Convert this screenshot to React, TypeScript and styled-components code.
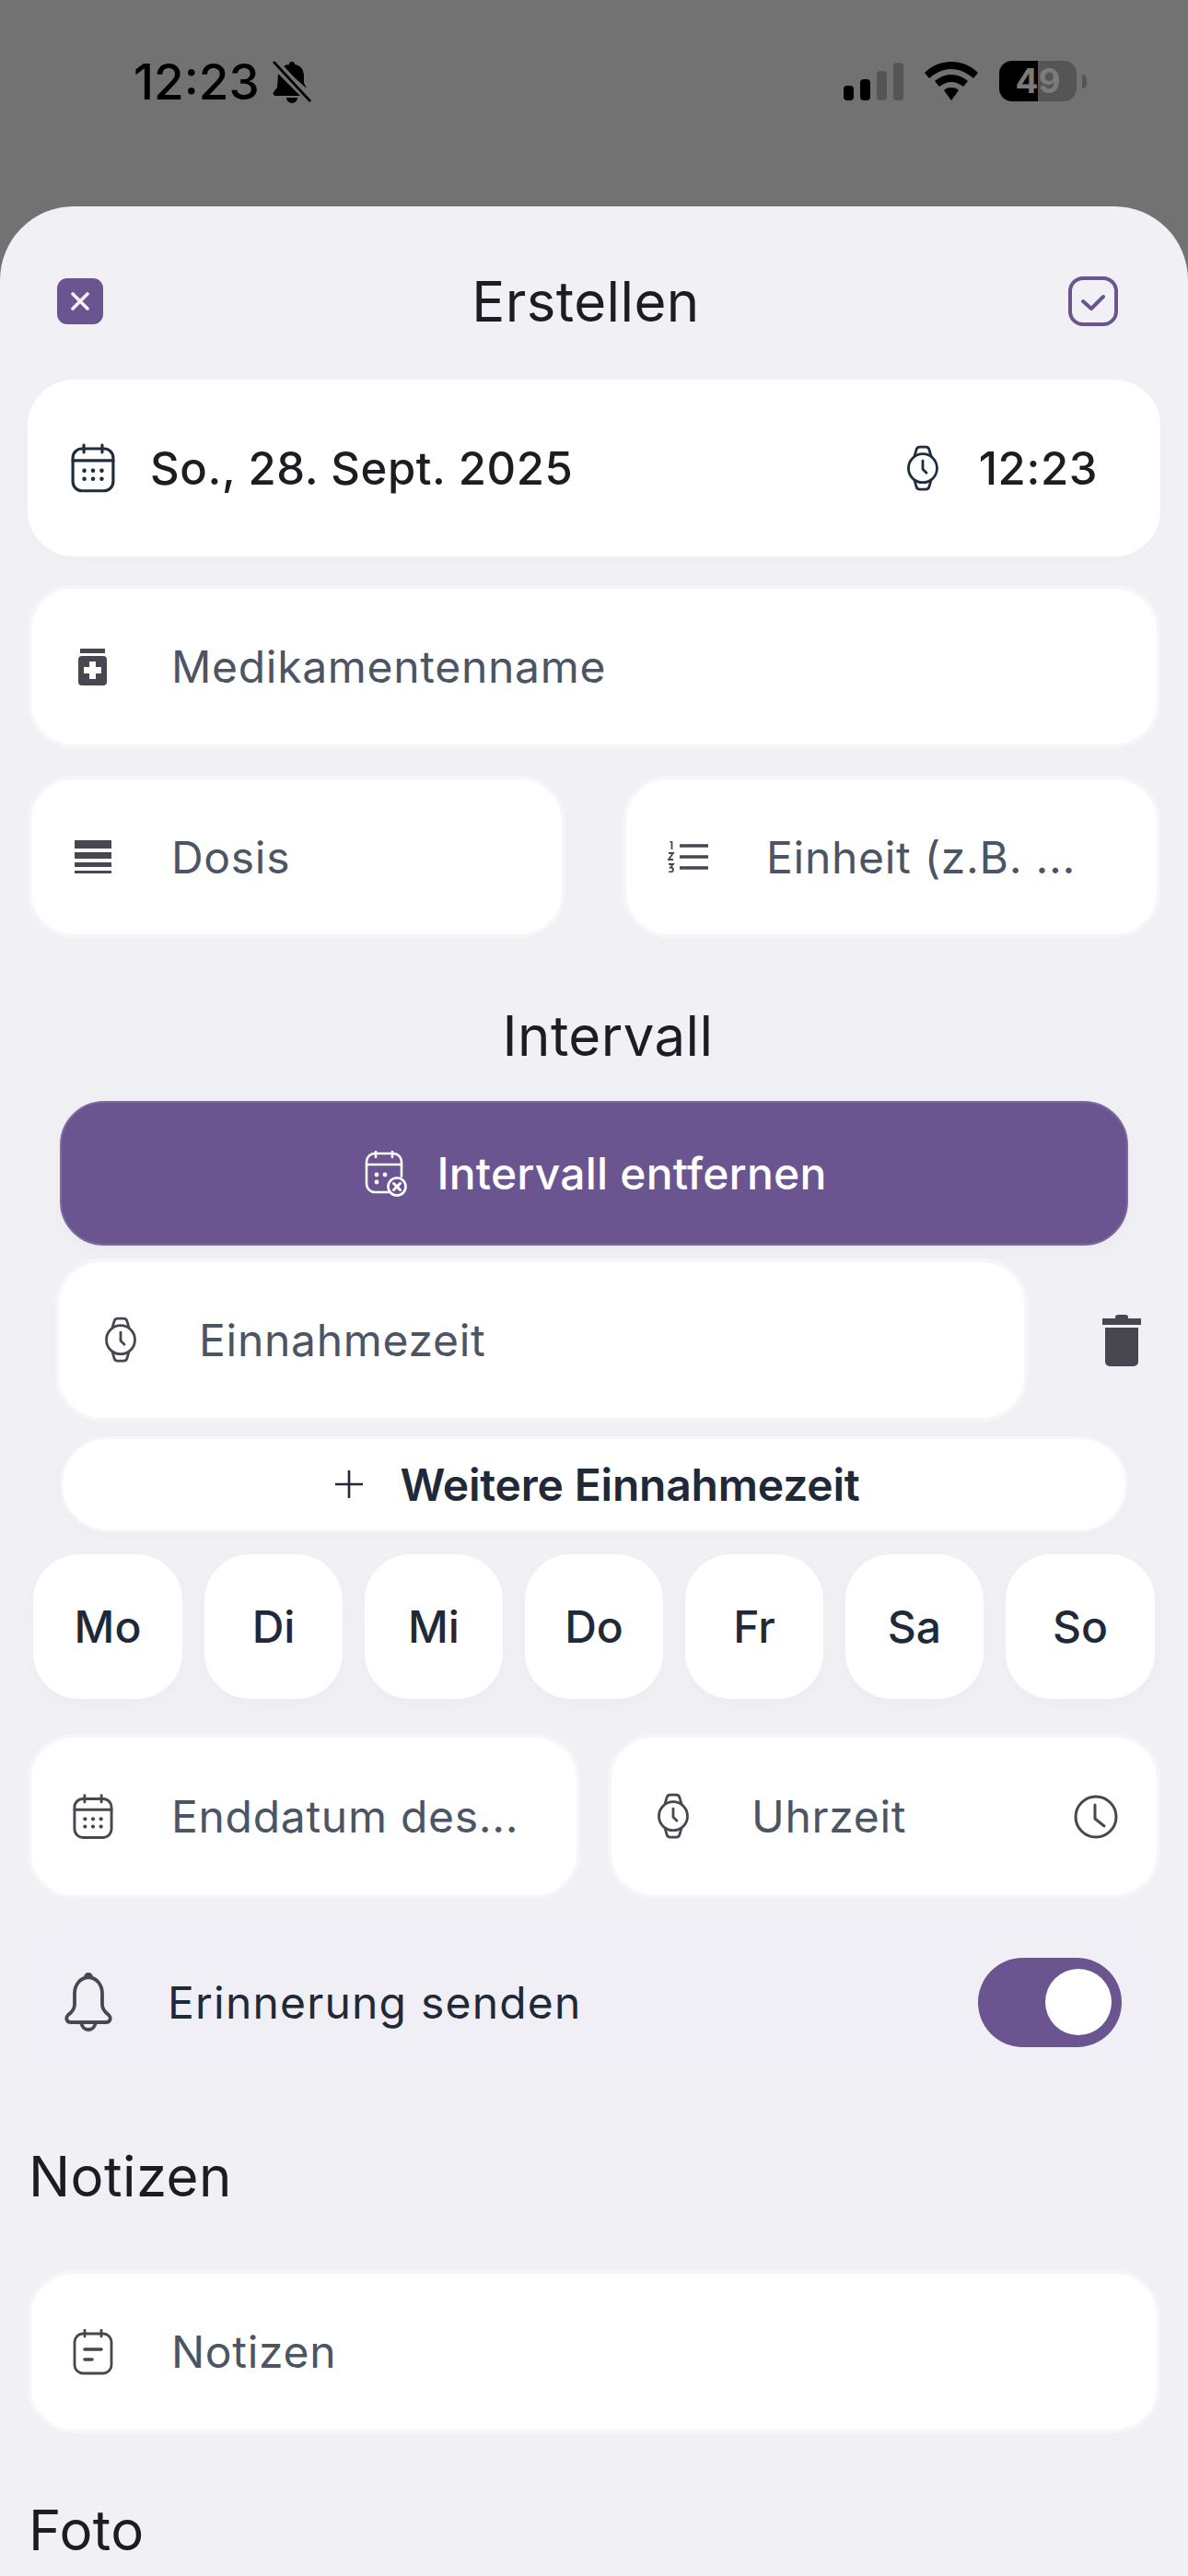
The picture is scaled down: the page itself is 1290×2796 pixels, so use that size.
import React from 'react'
import styled, { createGlobalStyle } from 'styled-components'

const PURPLE = '#6a5590'
const INK = '#1f2937'
const ICON = '#4a4651'

const GlobalStyle = createGlobalStyle`
  html, body {
    margin: 0;
    padding: 0;
    background: #727272;
  }
  * {
    box-sizing: border-box;
  }
`

const Screen = styled.div`
  width: 1290px;
  height: 2796px;
  overflow: hidden;
  background: #727272;
  font-family: Inter, 'Noto Sans', sans-serif;
`

const StatusBar = styled.div`
  height: 224px;
  display: flex;
  justify-content: space-between;
  align-items: flex-start;
  padding: 66px 110px 0 145px;
  color: #000;
`

const StatusGroup = styled.div<{ $gap: number }>`
  display: flex;
  align-items: center;
  gap: ${(p) => p.$gap}px;
`

const Time = styled.span`
  font-size: 53px;
  font-weight: 500;
  line-height: 44px;
`

const Battery = styled.span`
  width: 84px;
  height: 44px;
  border-radius: 14px;
  background: linear-gradient(90deg, #000 50%, #555 50%);
  color: #7b7b7b;
  font-size: 37px;
  font-weight: 700;
  line-height: 44px;
  text-align: center;
`

const BatteryNub = styled.span`
  width: 5px;
  height: 15px;
  margin-left: -17px;
  border-radius: 0 5px 5px 0;
  background: #555;
`

const Sheet = styled.div`
  height: 2572px;
  background: #f0f0f5;
  border-radius: 80px 80px 0 0;
  overflow: hidden;
  padding-top: 76px;
`

const Header = styled.div`
  display: flex;
  justify-content: space-between;
  align-items: center;
  height: 54px;
  padding: 0 76px 0 62px;
`

const Title = styled.div`
  font-size: 60px;
  line-height: 70px;
  color: #1c1c22;
  letter-spacing: 0.4px;
`

const CloseButton = styled.div`
  width: 50px;
  height: 50px;
  border-radius: 11px;
  background: ${PURPLE};
  display: flex;
  align-items: center;
  justify-content: center;
`

const DateCard = styled.div`
  margin: 58px 30px 0;
  height: 192px;
  border-radius: 50px;
  background: #fff;
  box-shadow: 0 6px 24px rgba(0, 0, 0, 0.015);
  display: flex;
  align-items: center;
  padding: 0 68px 0 47px;
`

const DateText = styled.span<{ $ml: number }>`
  margin-left: ${(p) => p.$ml}px;
  font-size: 49px;
  font-weight: 500;
  letter-spacing: 0.6px;
  color: #1c1c22;
`

const Spacer = styled.div`
  flex: 1;
`

const FieldRow = styled.div<{ $mt: number; $gap?: number; $mx?: string }>`
  display: flex;
  margin: ${(p) => p.$mt}px ${(p) => p.$mx ?? '30px 0'};
  gap: ${(p) => p.$gap ?? 0}px;
`

const Field = styled.div<{ $w?: number; $h?: number }>`
  flex: ${(p) => (p.$w ? `0 0 ${p.$w}px` : '1')};
  height: ${(p) => p.$h ?? 177}px;
  border-radius: 50px;
  background: #fff;
  border: 4px solid #f6f6f9;
  display: flex;
  align-items: center;
  padding: 0 42px 0 39px;
`

const IconSlot = styled.span`
  flex: 0 0 56px;
  display: flex;
  justify-content: center;
  align-items: center;
`

const Placeholder = styled.span`
  margin-left: 57px;
  flex: 1;
  font-size: 48px;
  letter-spacing: 0.7px;
  color: #4b5563;
  white-space: nowrap;
`

const SectionTitle = styled(Title)<{ $mt: number }>`
  margin-top: ${(p) => p.$mt}px;
  padding-left: 30px;
  text-align: center;
`

const SideTitle = styled(Title)<{ $mt: number }>`
  margin-top: ${(p) => p.$mt}px;
  padding-left: 31px;
`

const PrimaryButton = styled.div`
  margin: 36px 65px 0;
  height: 157px;
  border-radius: 48px;
  background: ${PURPLE};
  border: 2px solid #7b6a9e;
  box-shadow: 0 6px 24px rgba(0, 0, 0, 0.03);
  display: flex;
  align-items: center;
  justify-content: center;
  gap: 32px;
  padding-left: 4px;
  color: #fff;
  font-size: 48px;
  font-weight: 500;
  letter-spacing: 0.2px;
`

const TrashSlot = styled.div`
  flex: 1;
  display: flex;
  align-items: center;
  justify-content: center;
  padding-left: 60px;
`

const AddButton = styled.div`
  margin: 16px 65px 0;
  height: 104px;
  border-radius: 52px;
  background: #fff;
  border: 3px solid #f6f6f9;
  box-shadow: 0 6px 24px rgba(0, 0, 0, 0.02);
  display: flex;
  align-items: center;
  justify-content: center;
  gap: 40px;
  padding-left: 8px;
  font-size: 48px;
  font-weight: 600;
  letter-spacing: -0.2px;
  color: ${INK};
`

const DayRow = styled.div`
  display: flex;
  gap: 24px;
  margin: 24px 36px 0;
`

const DayChip = styled.div<{ $wide?: boolean }>`
  flex: 0 0 ${(p) => (p.$wide ? 162 : 150)}px;
  height: 157px;
  border-radius: 50px;
  background: #fff;
  box-shadow: 0 8px 24px rgba(0, 0, 0, 0.025);
  display: flex;
  align-items: center;
  justify-content: center;
  font-size: 48px;
  font-weight: 500;
  color: ${INK};
`

const NotifyRow = styled.div`
  margin: 31px 30px 0;
  height: 162px;
  border-radius: 40px;
  background: #f0eff5;
  display: flex;
  align-items: center;
  padding: 0 42px 0 40px;
`

const NotifyLabel = styled.span`
  margin-left: 60px;
  flex: 1;
  font-size: 48px;
  letter-spacing: 1.2px;
  color: ${INK};
`

const Toggle = styled.div`
  width: 156px;
  height: 97px;
  border-radius: 49px;
  background: ${PURPLE};
  display: flex;
  align-items: center;
  justify-content: flex-end;
  padding-right: 11px;
`

const Knob = styled.span`
  width: 72px;
  height: 72px;
  border-radius: 50%;
  background: #fff;
`

function CalendarIcon({ color = ICON, size = 48 }: { color?: string; size?: number }) {
  return (
    <svg width={size} height={size * 1.12} viewBox="0 0 48 54" fill="none" stroke={color} strokeWidth="3.2" strokeLinecap="round">
      <rect x="2" y="6" width="44" height="46" rx="10" />
      <path d="M14 2v8M34 2v8M2 19h44" />
      <g fill={color} stroke="none">
        <circle cx="14.5" cy="30" r="2.3" />
        <circle cx="24" cy="30" r="2.3" />
        <circle cx="33.5" cy="30" r="2.3" />
        <circle cx="14.5" cy="39" r="2.3" />
        <circle cx="24" cy="39" r="2.3" />
        <circle cx="33.5" cy="39" r="2.3" />
      </g>
    </svg>
  )
}

function CalendarRemoveIcon() {
  return (
    <svg width="46" height="50" viewBox="0 0 46 50" fill="none" stroke="#fff" strokeWidth="2.6" strokeLinecap="round">
      <path d="M26 45H11a9 9 0 0 1-9-9V12a9 9 0 0 1 9-9h20a9 9 0 0 1 9 9v16" />
      <path d="M12 1v6M30 1v6M2 15h38" />
      <g fill="#fff" stroke="none">
        <circle cx="13" cy="26" r="2.4" />
        <circle cx="22" cy="26" r="2.4" />
        <circle cx="13" cy="34" r="2.4" />
      </g>
      <circle cx="35" cy="39" r="9.5" />
      <path d="M31.5 35.5l7 7M38.5 35.5l-7 7" strokeWidth="3" />
    </svg>
  )
}

function WatchIcon({ color = ICON, size = 36 }: { color?: string; size?: number }) {
  return (
    <svg width={size} height={size * 1.4} viewBox="0 0 36 50" fill="none" stroke={color} strokeWidth="2.8" strokeLinecap="round" strokeLinejoin="round">
      <circle cx="18" cy="25" r="15.5" />
      <path d="M9 12l2-7a4 4 0 0 1 4-3h6a4 4 0 0 1 4 3l2 7" />
      <path d="M9 38l2 7a4 4 0 0 0 4 3h6a4 4 0 0 0 4-3l2-7" />
      <path d="M18 17v9l4 4" />
    </svg>
  )
}

function BottleIcon() {
  return (
    <svg width="32" height="40" viewBox="0 0 32 40">
      <rect x="2" y="0" width="27" height="5" fill={ICON} />
      <rect x="0" y="8" width="31" height="32" rx="4" fill={ICON} />
      <path d="M12 14h7v6h6v7h-6v6h-7v-6H6v-7h6z" fill="#fff" />
    </svg>
  )
}

function StackIcon() {
  return (
    <svg width="40" height="36" viewBox="0 0 40 36" fill={ICON}>
      <rect x="0" y="0" width="40" height="9" />
      <rect x="0" y="13" width="40" height="7" />
      <rect x="0" y="24" width="40" height="5" />
      <rect x="0" y="33" width="40" height="3" />
    </svg>
  )
}

function NumberedListIcon() {
  return (
    <svg width="44" height="34" viewBox="0 0 44 34" fill="none" stroke={ICON}>
      <path d="M13 5h31M13 17h31M13 29h31" strokeWidth="3.6" />
      <path d="M2.500 1L4.500 0v9" strokeWidth="1.8" />
      <path d="M1 13h5l-5 7h5" strokeWidth="1.8" />
      <path d="M1 25h5l-3 3.500c2 0 3 1 3 2.500s-1 2.500-3 2.500H1" strokeWidth="1.8" />
    </svg>
  )
}

function TrashIcon() {
  return (
    <svg width="42" height="56" viewBox="0 0 42 56" fill={ICON}>
      <path d="M14 3a3 3 0 0 1 3-3h8a3 3 0 0 1 3 3v1h14v7H0V4h14z" />
      <path d="M3 14h36v37a5 5 0 0 1-5 5H8a5 5 0 0 1-5-5z" />
    </svg>
  )
}

function ClockIcon() {
  return (
    <svg width="48" height="50" viewBox="0 0 48 50" fill="none" stroke={ICON} strokeWidth="3" strokeLinecap="round" strokeLinejoin="round">
      <circle cx="24" cy="25" r="22" />
      <path d="M23 12v15l10 8" />
    </svg>
  )
}

function NoteIcon() {
  return (
    <svg width="44" height="50" viewBox="0 0 44 50" fill="none" stroke={ICON} strokeWidth="2.8" strokeLinecap="round">
      <rect x="2" y="5" width="40" height="43" rx="9" />
      <path d="M13 1v7M31 1v7" />
      <path d="M13 22h18M13 33h8" strokeWidth="3.6" />
    </svg>
  )
}

function BellIcon() {
  return (
    <svg width="52" height="64" viewBox="0 0 52 64" fill="none" stroke={ICON} strokeWidth="3.8" strokeLinejoin="round" strokeLinecap="round">
      <path d="M26 5c-9 1-15 8-15 18v12c0 5-3 8-7 11-3 3-2 8 3 8h38c5 0 6-5 3-8-4-3-7-6-7-11V23c0-10-6-17-15-18z" />
      <path d="M23 5c0-4 6-4 6 0" />
      <path d="M18 54c1 5 4 8 8 8s7-3 8-8" />
    </svg>
  )
}

function BellOffIcon() {
  return (
    <svg width="42" height="46" viewBox="0 0 42 46" fill="#000">
      <path d="M21 1c2 0 3 1 3 3 7 1 10 6 10 13v7l3 6L11 7c2-2 4-3 7-3 0-2 1-3 3-3z" />
      <path d="M6 14l24 24H4c-3 0-4-2-3-4l4-5z" />
      <path d="M15 40h12c0 3-3 6-6 6s-6-3-6-6z" />
      <path d="M1 1l40 43" stroke="#000" strokeWidth="2.6" />
      <path d="M5 0l37 40" stroke="#727272" strokeWidth="2.6" />
    </svg>
  )
}

function SignalIcon() {
  return (
    <svg width="65" height="41" viewBox="0 0 65 41">
      <rect x="0" y="25" width="11" height="16" rx="4" fill="#000" />
      <rect x="18" y="18" width="11" height="23" rx="4" fill="#000" />
      <rect x="36" y="9" width="11" height="32" rx="4" fill="#555" />
      <rect x="54" y="0" width="11" height="41" rx="4" fill="#555" />
    </svg>
  )
}

function WifiIcon() {
  return (
    <svg width="58" height="42" viewBox="0 0 58 42" fill="#000">
      <path d="M29 0c11 0 21 4 29 12l-5 6C46 12 38 8 29 8S12 12 5 18l-5-6C8 4 18 0 29 0z" />
      <path d="M29 14c7 0 13 3 18 7l-5 6c-4-3-8-5-13-5s-9 2-13 5l-5-6c5-4 11-7 18-7z" />
      <path d="M29 28c4 0 6 1 8 3l-8 11-8-11c2-2 4-3 8-3z" />
    </svg>
  )
}

const DAYS = ['Mo', 'Di', 'Mi', 'Do', 'Fr', 'Sa', 'So']

export default function App() {
  return (
    <Screen>
      <GlobalStyle />
      <StatusBar>
        <StatusGroup $gap={14}>
          <Time>12:23</Time>
          <BellOffIcon />
        </StatusGroup>
        <StatusGroup $gap={23}>
          <SignalIcon />
          <WifiIcon />
          <Battery>49</Battery>
          <BatteryNub />
        </StatusGroup>
      </StatusBar>
      <Sheet>
        <Header>
          <CloseButton>
            <svg width="20" height="20" viewBox="0 0 20 20" stroke="#f4f2f8" strokeWidth="3.6" strokeLinecap="round">
              <path d="M2 2l16 16M18 2L2 18" />
            </svg>
          </CloseButton>
          <Title>Erstellen</Title>
          <svg width="54" height="54" viewBox="0 0 54 54" fill="none" stroke={PURPLE} strokeWidth="4" strokeLinecap="round" strokeLinejoin="round">
            <rect x="2" y="2" width="50" height="50" rx="14" />
            <path d="M16 27l9 8 13-13" />
          </svg>
        </Header>

        <DateCard>
          <CalendarIcon color="#1f2d3d" />
          <DateText $ml={38}>So., 28. Sept. 2025</DateText>
          <Spacer />
          <WatchIcon color="#1f2d3d" />
          <DateText $ml={43}>12:23</DateText>
        </DateCard>

        <FieldRow $mt={31}>
          <Field>
            <IconSlot>
              <BottleIcon />
            </IconSlot>
            <Placeholder>Medikamentenname</Placeholder>
          </Field>
        </FieldRow>

        <FieldRow $mt={30} $gap={62}>
          <Field $w={584} $h={176}>
            <IconSlot>
              <StackIcon />
            </IconSlot>
            <Placeholder>Dosis</Placeholder>
          </Field>
          <Field $h={176}>
            <IconSlot>
              <NumberedListIcon />
            </IconSlot>
            <Placeholder>Einheit (z.B. ...</Placeholder>
          </Field>
        </FieldRow>

        <SectionTitle $mt={71}>Intervall</SectionTitle>

        <PrimaryButton>
          <CalendarRemoveIcon />
          <span>Intervall entfernen</span>
        </PrimaryButton>

        <FieldRow $mt={14} $mx="30px 0 60px">
          <Field $w={1056}>
            <IconSlot>
              <WatchIcon />
            </IconSlot>
            <Placeholder>Einnahmezeit</Placeholder>
          </Field>
          <TrashSlot>
            <TrashIcon />
          </TrashSlot>
        </FieldRow>

        <AddButton>
          <svg width="30" height="30" viewBox="0 0 30 30" stroke={INK} strokeWidth="2.6">
            <path d="M15 0v30M0 15h30" />
          </svg>
          <span>Weitere Einnahmezeit</span>
        </AddButton>

        <DayRow>
          {DAYS.map((day, i) => (
            <DayChip key={day} $wide={i === 0 || i === DAYS.length - 1}>
              {day}
            </DayChip>
          ))}
        </DayRow>

        <FieldRow $mt={38} $gap={30}>
          <Field $w={600} $h={179}>
            <IconSlot>
              <CalendarIcon size={44} />
            </IconSlot>
            <Placeholder>Enddatum des...</Placeholder>
          </Field>
          <Field $h={179}>
            <IconSlot>
              <WatchIcon />
            </IconSlot>
            <Placeholder>Uhrzeit</Placeholder>
            <ClockIcon />
          </Field>
        </FieldRow>

        <NotifyRow>
          <BellIcon />
          <NotifyLabel>Erinnerung senden</NotifyLabel>
          <Toggle>
            <Knob />
          </Toggle>
        </NotifyRow>

        <SideTitle $mt={73}>Notizen</SideTitle>

        <FieldRow $mt={67}>
          <Field>
            <IconSlot>
              <NoteIcon />
            </IconSlot>
            <Placeholder>Notizen</Placeholder>
          </Field>
        </FieldRow>

        <SideTitle $mt={70}>Foto</SideTitle>
      </Sheet>
    </Screen>
  )
}
